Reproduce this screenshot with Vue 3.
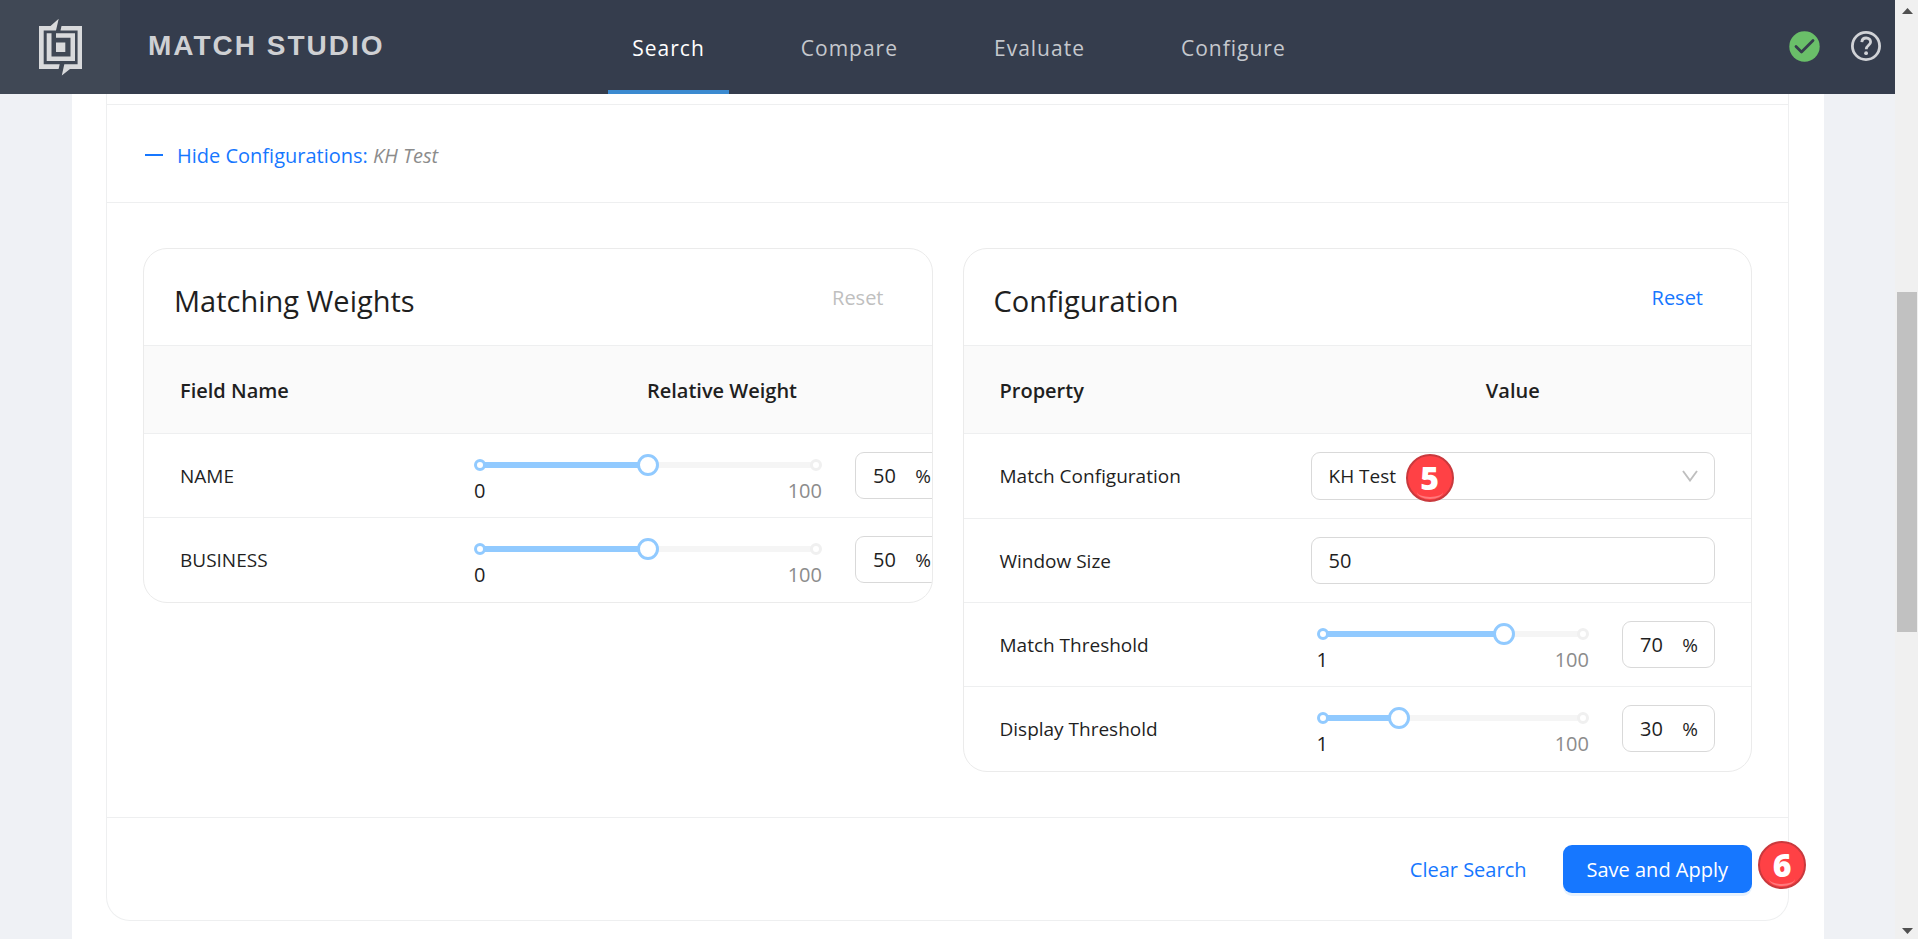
<script setup>
import { ref } from 'vue'

const tabs = ['Search', 'Compare', 'Evaluate', 'Configure']
const activeTab = ref('Search')

const weights = ref([
  { id: 'name', label: 'NAME', value: 50 },
  { id: 'business', label: 'BUSINESS', value: 50 },
])

const configName = ref('KH Test')
const windowSize = ref('50')
const thresholds = ref([
  { id: 'match', label: 'Match Threshold', value: 70 },
  { id: 'display', label: 'Display Threshold', value: 30 },
])

const fill = (value, min) => ({ width: ((value - min) / (100 - min)) * 100 + '%' })
</script>

<template>
  <div class="shell">
    <div class="view">
      <header class="topbar">
        <a href="#" class="logo" aria-label="Home">
          <svg width="44" height="58" viewBox="-1 0 44 58" fill="#d9dadc" aria-hidden="true">
            <path d="M0 8H11.500L19.700 0.800L17 12.500H4.700V46.300H20.700L19.600 51H0Z" />
            <path d="M22.500 8H43V51H31L22.800 57.500L25.300 46.300H38.600V12.500H21.500Z" />
            <path d="M7.700 15.300H12.500V38.500H31.500V19.800H17V15.300H36V43H7.700Z" />
            <path d="M17 24.500H26.300V34H17Z" />
          </svg>
        </a>
        <h1 class="brand">MATCH STUDIO</h1>
        <nav class="tabs">
          <a
            v-for="tab in tabs"
            :key="tab"
            href="#"
            class="tab"
            :class="{ active: tab === activeTab }"
            @click.prevent="activeTab = tab"
          >{{ tab }}</a>
        </nav>
        <div class="status">
          <button type="button" class="icon-btn" aria-label="Status">
            <svg width="32" height="32" viewBox="0 0 32 32" aria-hidden="true">
              <circle cx="16.500" cy="15.500" r="15.200" fill="#6abf69" />
              <path d="M8 15.500L13.500 21L25 9.500" fill="none" stroke="#353d4d" stroke-width="2.800" stroke-linecap="round" stroke-linejoin="round" />
            </svg>
          </button>
          <button type="button" class="icon-btn" aria-label="Help">
            <svg width="32" height="32" viewBox="0 0 32 32" fill="none" stroke="#d0d2d6" aria-hidden="true">
              <circle cx="16" cy="15" r="13.600" stroke-width="2.800" />
              <path d="M11.800 11.200C12 8.600 13.800 7 16.200 7C18.800 7 20.600 8.700 20.600 11C20.600 14 16.200 14.500 16.200 18.200" stroke-width="2.800" />
              <circle cx="16.100" cy="22.200" r="1.900" fill="#d0d2d6" stroke="none" />
            </svg>
          </button>
        </div>
      </header>

      <main class="page">
        <section class="panel">
          <div class="panel-prev"></div>
          <div class="toggle-row">
            <button type="button" class="toggle">
              <span class="dash" aria-hidden="true"></span>
              <span>Hide Configurations: <em>KH Test</em></span>
            </button>
          </div>

          <div class="cards">
            <section class="card">
              <div class="card-head">
                <h2>Matching Weights</h2>
                <button type="button" class="link" disabled>Reset</button>
              </div>
              <table class="wide">
                <colgroup><col class="col-field" /><col /></colgroup>
                <thead>
                  <tr><th class="first">Field Name</th><th>Relative Weight</th></tr>
                </thead>
                <tbody>
                  <tr v-for="w in weights" :key="w.id">
                    <td><label :for="w.id">{{ w.label }}</label></td>
                    <td>
                      <div class="measure">
                        <div class="slider">
                          <div class="rail">
                            <div class="fill" :style="fill(w.value, 0)"></div>
                            <i class="dot start"></i><i class="dot end"></i>
                            <input :id="w.id" v-model.number="w.value" type="range" min="0" max="100" />
                          </div>
                          <div class="marks"><span>0</span><span class="muted">100</span></div>
                        </div>
                        <div class="percent">
                          <input v-model.number="w.value" type="text" :aria-label="w.label + ' weight'" />
                          <span>%</span>
                        </div>
                      </div>
                    </td>
                  </tr>
                </tbody>
              </table>
            </section>

            <section class="card">
              <div class="card-head">
                <h2>Configuration</h2>
                <button type="button" class="link">Reset</button>
              </div>
              <table>
                <colgroup><col class="col-property" /><col /></colgroup>
                <thead>
                  <tr><th class="first">Property</th><th>Value</th></tr>
                </thead>
                <tbody>
                  <tr>
                    <td><label for="config">Match Configuration</label></td>
                    <td>
                      <div class="select">
                        <select id="config" v-model="configName"><option>KH Test</option></select>
                        <svg class="chevron" width="16" height="12" viewBox="0 0 16 12" fill="none" stroke="#bfbfbf" stroke-width="1.900" aria-hidden="true">
                          <path d="M1 1L8 10.500L15 1" />
                        </svg>
                        <span class="badge on-select">5</span>
                      </div>
                    </td>
                  </tr>
                  <tr>
                    <td><label for="window">Window Size</label></td>
                    <td><input id="window" v-model="windowSize" class="field" type="text" /></td>
                  </tr>
                  <tr v-for="t in thresholds" :key="t.id">
                    <td><label :for="t.id">{{ t.label }}</label></td>
                    <td>
                      <div class="measure">
                        <div class="slider">
                          <div class="rail">
                            <div class="fill" :style="fill(t.value, 1)"></div>
                            <i class="dot start"></i><i class="dot end"></i>
                            <input :id="t.id" v-model.number="t.value" type="range" min="1" max="100" />
                          </div>
                          <div class="marks"><span>1</span><span class="muted">100</span></div>
                        </div>
                        <div class="percent">
                          <input v-model.number="t.value" type="text" :aria-label="t.label + ' percent'" />
                          <span>%</span>
                        </div>
                      </div>
                    </td>
                  </tr>
                </tbody>
              </table>
            </section>
          </div>

          <div class="actions">
            <button type="button" class="clear">Clear Search</button>
            <div class="save-wrap">
              <button type="button" class="save">Save and Apply</button>
              <span class="badge on-save">6</span>
            </div>
          </div>
        </section>
      </main>
    </div>

    <div class="scrollbar" aria-hidden="true">
      <svg class="arrow" viewBox="0 0 23 23"><path d="M7 14L12.500 8L18 14Z" /></svg>
      <div class="before"></div>
      <div class="thumb"></div>
      <div class="after"></div>
      <svg class="arrow" viewBox="0 0 23 23"><path d="M7 12L12.500 18L18 12Z" /></svg>
    </div>
  </div>
</template>

<style>
body {
  margin: 0;
  overflow: hidden;
}
</style>

<style scoped>
* {
  box-sizing: border-box;
}
.shell {
  display: flex;
  height: 100vh;
  overflow: hidden;
  color: #1f1f1f;
  background: #eff1f5;
  font-family: "Open Sans", "Noto Sans", sans-serif;
  font-size: 20px;
  line-height: 30px;
}
button,
input,
select {
  margin: 0;
  font: inherit;
  color: inherit;
}
button {
  padding: 0;
  border: 0;
  background: none;
  cursor: pointer;
}
.view {
  flex: 1;
  min-width: 0;
  display: flex;
  flex-direction: column;
}

.topbar {
  position: relative;
  flex: none;
  display: flex;
  height: 94px;
  background: #353d4d;
}
.logo {
  display: flex;
  justify-content: center;
  width: 120px;
  padding-top: 18px;
  background: #404855;
}
.brand {
  margin: 0;
  padding: 30px 0 0 28px;
  font: 700 28px/32px "Liberation Sans", Arial, sans-serif;
  letter-spacing: 2px;
  color: #cfd0d3;
}
.tabs {
  position: absolute;
  inset: 0 -23px 0 0;
  display: flex;
  justify-content: center;
  gap: 48px;
  pointer-events: none;
}
.tab {
  padding: 33px 24px 0;
  border-bottom: 4px solid transparent;
  font-size: 21px;
  letter-spacing: 1px;
  color: #c5c8cd;
  text-decoration: none;
  pointer-events: auto;
}
.tab.active {
  border-color: #3b8ad0;
  color: #fff;
}
.status {
  display: flex;
  align-items: center;
  gap: 30px;
  margin-left: auto;
  padding-right: 13px;
}
.icon-btn {
  height: 32px;
}
.icon-btn svg {
  display: block;
}

.page {
  flex: 1;
  min-height: 0;
  overflow: hidden;
  margin: 0 71px 0 72px;
  padding: 0 35px 0 34px;
  background: #fff;
}
.panel {
  border: 1px solid #eeeff0;
  border-top: 0;
  border-radius: 0 0 24px 24px;
}
.panel-prev {
  height: 11px;
  border-bottom: 1px solid #eeeff0;
}
.toggle-row {
  display: flex;
  align-items: center;
  height: 98px;
  padding: 4px 0 0 38px;
  border-bottom: 1px solid #eeeff0;
}
.toggle {
  display: flex;
  align-items: center;
  gap: 14px;
  color: #1677ff;
}
.toggle em {
  color: #8c8c8c;
}
.dash {
  width: 18px;
  height: 2px;
  margin-bottom: 2px;
  background: #1677ff;
}
.cards {
  display: flex;
  align-items: flex-start;
  gap: 30px;
  padding: 45px 36px;
}
.card {
  flex: 1;
  min-width: 0;
  overflow: hidden;
  border: 1px solid #ebebeb;
  border-radius: 24px;
}
.card-head {
  display: flex;
  justify-content: space-between;
  align-items: center;
  height: 97px;
  padding: 2px 48px 0 30px;
  border-bottom: 1px solid #eeeff0;
}
.card-head h2 {
  margin: 0;
  padding-top: 6px;
  font-size: 29px;
  line-height: 40px;
  font-weight: 400;
}
.link,
.clear {
  color: #1677ff;
}
.link:disabled {
  color: #bfbfbf;
}

table {
  width: 100%;
  table-layout: fixed;
  border-collapse: separate;
  border-spacing: 0;
}
.wide {
  min-width: 868px;
}
.col-field {
  width: 288px;
}
.col-property {
  width: 311px;
}
th {
  height: 88px;
  padding: 2px 36px 0;
  border-bottom: 1px solid #eeeff0;
  background: #fafafa;
  font-weight: 600;
  text-align: center;
}
th.first {
  text-align: left;
}
td {
  padding: 18px 36px;
  border-bottom: 1px solid #eeeff0;
}
td label {
  font-size: 19px;
}
tbody tr:last-child td {
  border-bottom-color: transparent;
}

.measure {
  display: flex;
  max-width: 480px;
  height: 47px;
}
.slider {
  flex: 1;
  margin: 0 39px 0 12px;
}
.rail {
  position: relative;
  height: 6px;
  margin-top: 10px;
  background: #f5f5f5;
}
.fill {
  height: 6px;
  background: #91caff;
}
.dot {
  position: absolute;
  top: -3px;
  width: 12px;
  height: 12px;
  border: 3px solid #f0f0f0;
  border-radius: 50%;
  background: #fff;
}
.dot.start {
  left: -6px;
  border-color: #91caff;
}
.dot.end {
  right: -6px;
}
.rail input {
  position: absolute;
  top: -8px;
  left: -11px;
  width: calc(100% + 22px);
  height: 22px;
  appearance: none;
  background: none;
}
.rail input::-webkit-slider-thumb {
  appearance: none;
  width: 22px;
  height: 22px;
  border: 3px solid #91caff;
  border-radius: 50%;
  background: #fff;
}
.marks {
  display: flex;
  justify-content: space-between;
  margin: 8px -6px 0;
  line-height: 30px;
}
.muted {
  color: #8c8c8c;
}
.percent {
  display: flex;
  align-items: center;
  width: 93px;
  height: 47px;
  padding: 0 16px 0 17px;
  border: 1px solid #d9d9d9;
  border-radius: 9px;
}
.percent input {
  flex: 1;
  min-width: 0;
  width: 100%;
  padding: 0;
  border: 0;
  background: none;
}
.percent span {
  font-size: 19px;
}
.field,
.select select {
  display: block;
  width: 100%;
  height: 47px;
  padding: 0 17px;
  border: 1px solid #d9d9d9;
  border-radius: 9px;
  background: #fff;
}
.select {
  position: relative;
}
.select select {
  height: 48px;
  appearance: none;
  font-size: 19px;
}
.chevron {
  position: absolute;
  top: 18px;
  right: 17px;
}
.badge {
  position: absolute;
  display: flex;
  align-items: center;
  justify-content: center;
  width: 48px;
  height: 48px;
  border: 2px solid #c9393d;
  border-radius: 50%;
  background: #ff4145;
  color: #fff;
  font: 800 32px/32px "Open Sans", "Noto Sans", sans-serif;
}
.badge::after {
  content: "";
  position: absolute;
  left: 9px;
  right: 9px;
  bottom: 1px;
  height: 12px;
  border-bottom: 2px solid #ff7a7d;
  border-radius: 50%;
}
.on-select {
  top: 2px;
  left: 95px;
}
.on-save {
  top: -4px;
  left: calc(100% + 6px);
}

.actions {
  display: flex;
  justify-content: flex-end;
  gap: 12px;
  padding: 27px 36px;
  border-top: 1px solid #eeeff0;
}
.clear {
  padding: 2px 24px 0;
}
.save-wrap {
  position: relative;
}
.save {
  height: 48px;
  padding: 2px 24px 0;
  border-radius: 9px;
  background: #1677ff;
  box-shadow: 0 3px 0 #e6f2ff;
  color: #fff;
}

.scrollbar {
  flex: none;
  display: flex;
  flex-direction: column;
  width: 23px;
  background: #f0f0f0;
}
.arrow {
  flex: none;
  width: 23px;
  height: 23px;
  fill: #505050;
}
.before {
  flex: 269;
}
.thumb {
  flex: 340;
  margin: 0 1px 0 2px;
  background: #c1c1c1;
}
.after {
  flex: 284;
}
</style>
